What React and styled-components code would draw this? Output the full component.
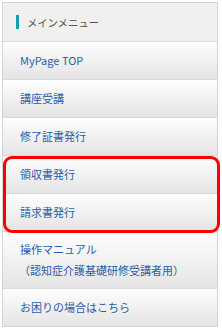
import React from "react";
import styled, { createGlobalStyle } from "styled-components";

const Global = createGlobalStyle`
  html, body { margin: 0; padding: 0; background: #fff; }
  body { font-family: "Noto Sans CJK JP", "Noto Sans", sans-serif; }
`;

const Menu = styled.nav`
  margin: 2px 0 0 2px;
  width: 216px;
  border: 1px solid #d4d4d4;
  box-sizing: border-box;
  background: #fff;
`;

const Header = styled.div`
  height: 38px;
  display: flex;
  align-items: center;
  gap: 8px;
  padding-left: 13px;
  background: #f0f0f0;
  border-bottom: 1px solid #dcdcdc;
  color: #555;
  font-size: 10.5px;
  letter-spacing: -0.2px;
`;

const Bar = styled.span`
  width: 3px;
  height: 14px;
  background: #1a9aa8;
`;

const Item = styled.a`
  display: flex;
  flex-direction: column;
  justify-content: center;
  min-height: ${(p) => (p.$tall ? 56 : 37)}px;
  padding-left: 17px;
  border-bottom: ${(p) => (p.$last ? "none" : "1px solid #dadada")};
  background: linear-gradient(#fefefe, #e4e4e4);
  color: #2a5cab;
  font-size: 11px;
  line-height: 21px;
  text-decoration: none;
`;

const Sub = styled.span`
  margin-left: -1px;
`;

const Highlight = styled.div`
  position: relative;
  &::after {
    content: "";
    position: absolute;
    top: 0;
    bottom: -1px;
    left: 0;
    right: -3px;
    border: 3px solid #ff0000;
    border-radius: 9px;
    pointer-events: none;
  }
`;

export default function App() {
  return (
    <>
      <Global />
      <Menu>
        <Header>
          <Bar />
          メインメニュー
        </Header>
        <Item>MyPage TOP</Item>
        <Item>講座受講</Item>
        <Item>修了証書発行</Item>
        <Highlight>
          <Item>領収書発行</Item>
          <Item>請求書発行</Item>
        </Highlight>
        <Item $tall>
          <span>操作マニュアル</span>
          <Sub>（認知症介護基礎研修受講者用）</Sub>
        </Item>
        <Item $last>お困りの場合はこちら</Item>
      </Menu>
    </>
  );
}
